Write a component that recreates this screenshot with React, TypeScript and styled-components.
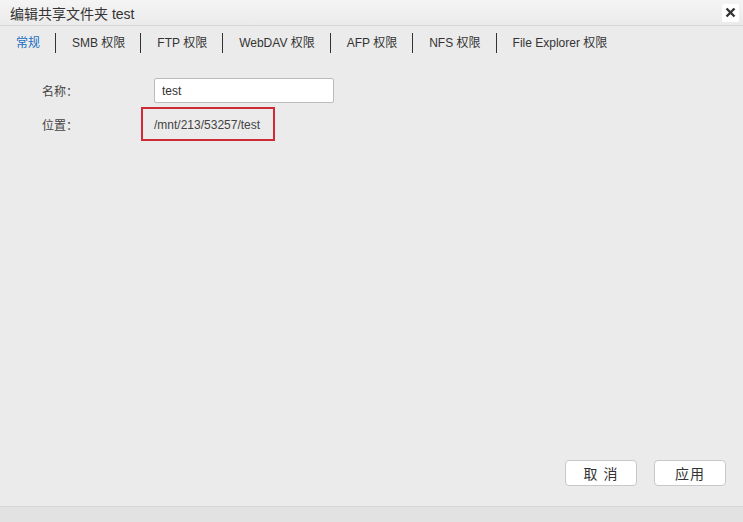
import { createGlobalStyle } from 'styled-components';
import styled from 'styled-components';

const GlobalStyle = createGlobalStyle`
  html, body {
    margin: 0;
    padding: 0;
    background: #ebebeb;
  }
  body {
    font-family: 'Liberation Sans', 'Noto Sans CJK SC', sans-serif;
    font-size: 12px;
    color: #333;
  }
`;

const Dialog = styled.div`
  width: 743px;
  height: 522px;
  display: flex;
  flex-direction: column;
  background: #ebebeb;
  overflow: hidden;
`;

const TitleBar = styled.div`
  height: 26px;
  display: flex;
  align-items: center;
  justify-content: space-between;
  padding: 0 4px 0 10px;
  background: linear-gradient(#f4f4f4, #ebebeb);
  border-bottom: 1px solid #d6d6d6;
  box-sizing: border-box;
  font-size: 14px;
  color: #333;
`;

const CloseButton = styled.button`
  width: 17px;
  height: 18px;
  padding: 0;
  border: none;
  border-radius: 2px;
  background: #fff;
  display: flex;
  align-items: center;
  justify-content: center;
  cursor: pointer;
`;

const Tabs = styled.div`
  display: flex;
  align-items: center;
  height: 29px;
  padding-top: 2px;
`;

const Tab = styled.div<{ active?: boolean; last?: boolean }>`
  padding: 0 15px 0 16px;
  line-height: 20px;
  font-size: 12px;
  color: ${({ active }) => (active ? '#1b6ec2' : '#333')};
  border-right: ${({ last }) => (last ? 'none' : '1px solid #333')};
  white-space: nowrap;
`;

const Body = styled.div`
  flex: 1;
  padding: 21px 0 0 42px;
  display: flex;
  flex-direction: column;
  gap: 5px;
`;

const Row = styled.div`
  display: flex;
  align-items: center;
  height: 24px;
`;

const PathRow = styled(Row)`
  height: 34px;
`;

const Label = styled.div`
  width: 112px;
  font-size: 12px;
  color: #444;
  padding-top: 1px;
`;

const TextInput = styled.input`
  width: 180px;
  height: 25px;
  box-sizing: border-box;
  border: 1px solid #bcbcbc;
  border-radius: 2px;
  background: #fff;
  padding: 1px 7px 0;
  font-family: inherit;
  font-size: 12px;
  color: #333;
  outline: none;
`;

const PathBox = styled.div`
  margin-left: -13px;
  height: 34px;
  width: 134px;
  box-sizing: border-box;
  border: 2px solid #cf2a36;
  display: flex;
  align-items: center;
  padding: 2px 0 0 11px;
  font-size: 12px;
  color: #444;
`;

const Footer = styled.div`
  display: flex;
  justify-content: flex-end;
  gap: 17px;
  padding: 0 17px 20px 0;
`;

const Button = styled.button`
  width: 72px;
  height: 26px;
  box-sizing: border-box;
  border: 1px solid #c8c8c8;
  border-radius: 4px;
  background: #fff;
  font-family: inherit;
  font-size: 14px;
  color: #333;
  letter-spacing: 1px;
  cursor: pointer;
`;

const StatusBar = styled.div`
  height: 15px;
  background: #e2e2e2;
  border-top: 1px solid #d6d6d6;
`;

const tabs = [
  '常规',
  'SMB 权限',
  'FTP 权限',
  'WebDAV 权限',
  'AFP 权限',
  'NFS 权限',
  'File Explorer 权限',
];

export default function App() {
  return (
    <>
      <GlobalStyle />
      <Dialog>
        <TitleBar>
          <span>编辑共享文件夹 test</span>
          <CloseButton aria-label="close">
            <svg width="11" height="11" viewBox="0 0 11 11">
              <path
                d="M1.5 1.5 L9.5 9.5 M9.5 1.5 L1.5 9.5"
                stroke="#333"
                strokeWidth="2.4"
              />
            </svg>
          </CloseButton>
        </TitleBar>
        <Tabs>
          {tabs.map((t, i) => (
            <Tab key={t} active={i === 0} last={i === tabs.length - 1}>
              {t}
            </Tab>
          ))}
        </Tabs>
        <Body>
          <Row>
            <Label>名称：</Label>
            <TextInput defaultValue="test" />
          </Row>
          <PathRow>
            <Label>位置：</Label>
            <PathBox>/mnt/213/53257/test</PathBox>
          </PathRow>
        </Body>
        <Footer>
          <Button>取 消</Button>
          <Button>应用</Button>
        </Footer>
        <StatusBar />
      </Dialog>
    </>
  );
}
